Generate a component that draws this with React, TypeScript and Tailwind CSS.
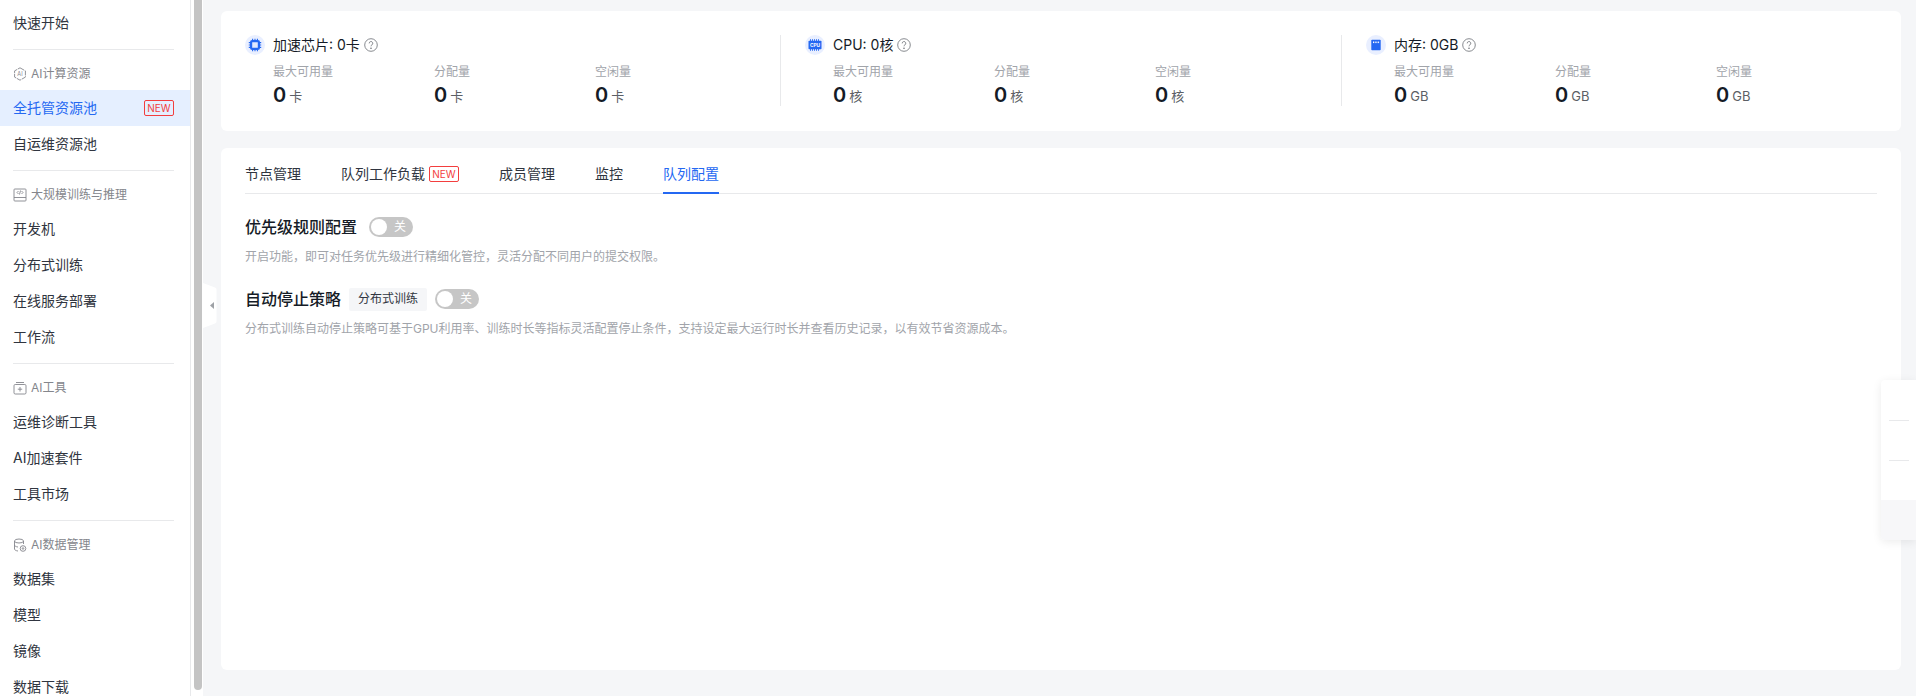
import React from "react";

const FONT = "font-['Inter','Noto_Sans_CJK_SC',sans-serif]";

function AiIcon() {
  return (
    <svg width="14" height="14" viewBox="0 0 14 14" fill="none" stroke="#84868c" strokeWidth="0.9">
      <path d="M7 .8 12.400 3.900v6.200L7 13.200 1.600 10.100V3.900z" strokeDasharray="5 0.8" />
      <text x="7" y="9.100" textAnchor="middle" fontSize="5.500" fill="#84868c" stroke="none" fontFamily="Inter">AI</text>
    </svg>
  );
}
function BoardIcon() {
  return (
    <svg width="14" height="14" viewBox="0 0 14 14" fill="none" stroke="#84868c" strokeWidth="0.9">
      <rect x="1" y="1" width="12" height="12" rx="0.8" />
      <path d="M1 9.500h12M5.500 3 4 4.500 5.500 6M8.500 3 10 4.500 8.500 6M7.500 2.500l-1 4" />
    </svg>
  );
}
function ToolIcon() {
  return (
    <svg width="14" height="14" viewBox="0 0 14 14" fill="none" stroke="#84868c" strokeWidth="0.9">
      <rect x="1" y="3.500" width="12" height="9.500" rx="1.200" />
      <path d="M3 1.500h8M7 6v4.500M4.800 8.200h4.400" />
    </svg>
  );
}
function DataIcon() {
  return (
    <svg width="14" height="14" viewBox="0 0 14 14" fill="none" stroke="#84868c" strokeWidth="0.9">
      <ellipse cx="6" cy="3" rx="4.500" ry="2" />
      <path d="M1.500 3v8c0 1 1.500 1.800 3.500 2M1.500 7c0 1 1.500 1.800 3.500 2M10.500 3v3" />
      <circle cx="10" cy="10.500" r="2.800" />
      <circle cx="10" cy="10.500" r="0.800" />
    </svg>
  );
}

function New() {
  return (
    <span className="flex h-4 w-[30px] items-center justify-center rounded-[2px] border border-[#f33e3e] text-[10px] leading-none text-[#f33e3e]">
      NEW
    </span>
  );
}

function Item({ label, active, badge }: { label: string; active?: boolean; badge?: boolean }) {
  return (
    <div
      className={`flex h-9 shrink-0 items-center justify-between pl-[13px] pr-4 text-sm ${
        active ? "bg-[#e5efff] text-[#2468f2]" : "text-[#303540]"
      }`}
    >
      <span>{label}</span>
      {badge && <New />}
    </div>
  );
}

function Divider() {
  return <div className="my-2 ml-[13px] mr-4 h-px shrink-0 bg-[#e8e9eb]" />;
}

function Header({ icon, label }: { icon: React.ReactNode; label: string }) {
  return (
    <div className="flex h-8 shrink-0 items-start gap-1 pl-[13px] pt-[8px] text-xs leading-4 text-[#84868c]">
      <span className="flex h-4 items-center">{icon}</span>
      <span>{label}</span>
    </div>
  );
}

function Sidebar() {
  return (
    <aside className="flex h-[696px] w-[191px] shrink-0 flex-col overflow-hidden border-r border-[#e8e9eb] bg-white pt-[5px]">
      <Item label="快速开始" />
      <Divider />
      <Header icon={<AiIcon />} label="AI计算资源" />
      <Item label="全托管资源池" active badge />
      <Item label="自运维资源池" />
      <Divider />
      <Header icon={<BoardIcon />} label="大规模训练与推理" />
      <Item label="开发机" />
      <Item label="分布式训练" />
      <Item label="在线服务部署" />
      <Item label="工作流" />
      <Divider />
      <Header icon={<ToolIcon />} label="AI工具" />
      <Item label="运维诊断工具" />
      <Item label="AI加速套件" />
      <Item label="工具市场" />
      <Divider />
      <Header icon={<DataIcon />} label="AI数据管理" />
      <Item label="数据集" />
      <Item label="模型" />
      <Item label="镜像" />
      <Item label="数据下载" />
    </aside>
  );
}

function ChipIcon() {
  return (
    <svg width="14" height="14" viewBox="0 0 14 14">
      <rect x="3.100" y="3.100" width="7.800" height="7.800" rx="1" fill="#dfe8ff" stroke="#2468f2" strokeWidth="2.200" />
      <path
        d="M4.600 .8v2M7 .8v2M9.400 .8v2M4.600 11.200v2M7 11.200v2M9.400 11.200v2M.8 4.600h2M.8 7h2M.8 9.400h2M11.200 4.600h2M11.200 7h2M11.200 9.400h2"
        stroke="#2468f2"
        strokeWidth="1.100"
      />
    </svg>
  );
}
function CpuIcon() {
  return (
    <svg width="14" height="14" viewBox="0 0 14 14">
      <rect x="0.500" y="2.800" width="13" height="8.400" rx="0.800" fill="#2468f2" />
      <path
        d="M2.500 1.200v2M4.500 1.200v2M6.500 1.200v2M8.500 1.200v2M10.500 1.200v2M2.500 10.800v2M4.500 10.800v2M6.500 10.800v2M8.500 10.800v2M10.500 10.800v2"
        stroke="#2468f2"
        strokeWidth="0.900"
      />
      <text x="7" y="8.900" textAnchor="middle" fontSize="4.800" fontWeight="700" fill="#fff" fontFamily="Inter">CPU</text>
    </svg>
  );
}
function MemIcon() {
  return (
    <svg width="14" height="14" viewBox="0 0 14 14">
      <path d="M2.300 2.500a.8.800 0 0 1 .8-.8h7.800a.8.800 0 0 1 .8.800v9a.8.800 0 0 1-.8.800H3.100a.8.800 0 0 1-.8-.8z" fill="#2468f2" />
      <path d="M4.500 3.500v1.600M6.200 3.500v1.600M7.900 3.500v1.600M9.600 3.500v1.600" stroke="#fff" strokeWidth="1" />
    </svg>
  );
}
function HelpIcon() {
  return (
    <svg width="14" height="14" viewBox="0 0 14 14" fill="none" stroke="#6a6d73" strokeWidth="0.800">
      <circle cx="7" cy="7" r="6.300" />
      <path d="M5.200 5.400a1.800 1.800 0 1 1 2.700 1.500c-.6.400-.9.700-.9 1.400" />
      <circle cx="7" cy="10.200" r="0.400" fill="#6a6d73" />
    </svg>
  );
}

function Metric({ label, unit }: { label: string; unit: string }) {
  return (
    <div className="w-[161px]">
      <div className="text-xs leading-[18px] text-[#a1a4aa]">{label}</div>
      <div className="flex h-[27px] items-center">
        <span className="text-xl font-semibold leading-7 text-[#151b26]">0</span>
        <span className="ml-[3px] mt-[3px] text-[13px] leading-5 text-[#5c5f66]">{unit}</span>
      </div>
    </div>
  );
}

function Stat({
  icon,
  title,
  unit,
  className,
}: {
  icon: React.ReactNode;
  title: string;
  unit: string;
  className: string;
}) {
  return (
    <section className={className}>
      <div className="flex h-5 items-center">
        <span className="flex size-5 items-center justify-center rounded-full bg-[#e9efff]">{icon}</span>
        <span className="ml-2 mr-1 text-sm leading-[22px] text-[#151b26]">{title}</span>
        <HelpIcon />
      </div>
      <div className="mt-[8px] flex pl-7">
        <Metric label="最大可用量" unit={unit} />
        <Metric label="分配量" unit={unit} />
        <Metric label="空闲量" unit={unit} />
      </div>
    </section>
  );
}

function Switch() {
  return (
    <span className="relative flex h-5 w-11 shrink-0 items-center justify-end rounded-full bg-[#c6c6c6] pr-[7px] text-xs leading-none text-white">
      <span className="absolute left-[2px] top-[2px] size-4 rounded-full bg-white" />
      关
    </span>
  );
}

function Tabs() {
  const tabs = ["节点管理", "队列工作负载", "成员管理", "监控", "队列配置"];
  return (
    <div className="flex h-[46px] gap-10 border-b border-[#e8e9eb]">
      {tabs.map((t, i) => (
        <div
          key={t}
          className={`flex h-[46px] items-center gap-1 border-b-2 pb-[7px] pt-[15px] text-sm ${
            i === 4 ? "border-[#2468f2] text-[#2468f2]" : "border-transparent text-[#303540]"
          }`}
        >
          {t}
          {i === 1 && <New />}
        </div>
      ))}
    </div>
  );
}

export default function App() {
  return (
    <div className={`relative flex h-[696px] w-[1916px] overflow-hidden bg-[#f5f6f8] ${FONT}`}>
      <Sidebar />
      <div className="flex h-full w-[12px] shrink-0 flex-col bg-white pb-[6px] pl-[3px] pr-[1px]">
        <div className="h-full rounded-b-[4px] bg-[#c4c4c4]" />
      </div>
      <svg className="absolute left-[203px] top-[283px]" width="15" height="45" viewBox="0 0 15 45">
        <path d="M0 0 12 4.500a2 2 0 0 1 1.500 2v32a2 2 0 0 1-1.500 2L0 45z" fill="#fff" />
        <path d="M11 19v7l-4-3.500z" fill="#9ea1a6" />
      </svg>
      <main className="flex min-w-0 flex-1 flex-col pb-[26px] pl-[18px] pr-[15px] pt-[11px]">
        <div className="flex h-[120px] shrink-0 rounded-md bg-white p-6 pb-0">
          <Stat className="h-[71px] w-[535px] shrink-0" icon={<ChipIcon />} title="加速芯片: 0卡" unit="卡" />
          <Stat className="h-[71px] w-[561px] shrink-0 border-l border-[#e8e9eb] pl-6" icon={<CpuIcon />} title="CPU: 0核" unit="核" />
          <Stat className="h-[71px] w-[536px] shrink-0 border-l border-[#e8e9eb] pl-6" icon={<MemIcon />} title="内存: 0GB" unit="GB" />
        </div>
        <div className="mt-[17px] min-h-0 flex-1 rounded-md bg-white px-6">
          <Tabs />
          <div className="mt-[21px] flex h-6 items-center gap-3">
            <h3 className="text-base font-medium leading-6 text-[#151b26]">优先级规则配置</h3>
            <Switch />
          </div>
          <p className="mt-[8px] text-xs leading-5 text-[#a1a4aa]">开启功能，即可对任务优先级进行精细化管控，灵活分配不同用户的提交权限。</p>
          <div className="mt-[20px] flex h-6 items-center gap-2">
            <h3 className="text-base font-medium leading-6 text-[#151b26]">自动停止策略</h3>
            <span className="flex h-[23px] w-[78px] items-center justify-center rounded-[2px] bg-[#f5f6f8] text-xs text-[#303540]">分布式训练</span>
            <Switch />
          </div>
          <p className="mt-[8px] text-xs leading-5 text-[#a1a4aa]">分布式训练自动停止策略可基于GPU利用率、训练时长等指标灵活配置停止条件，支持设定最大运行时长并查看历史记录，以有效节省资源成本。</p>
        </div>
      </main>
      <div className="absolute right-0 top-[380px] flex w-[35px] flex-col rounded-l-[4px] bg-white shadow-[0_2px_10px_rgba(0,0,0,0.08)]">
        <div className="flex h-[41px] items-end pl-2"><span className="h-px w-5 bg-[#e8e9eb]" /></div>
        <div className="flex h-10 items-end pl-2"><span className="h-px w-5 bg-[#e8e9eb]" /></div>
        <div className="h-[39px]" />
        <div className="h-10 rounded-bl-[4px] bg-[#f7f7f9]" />
      </div>
    </div>
  );
}
